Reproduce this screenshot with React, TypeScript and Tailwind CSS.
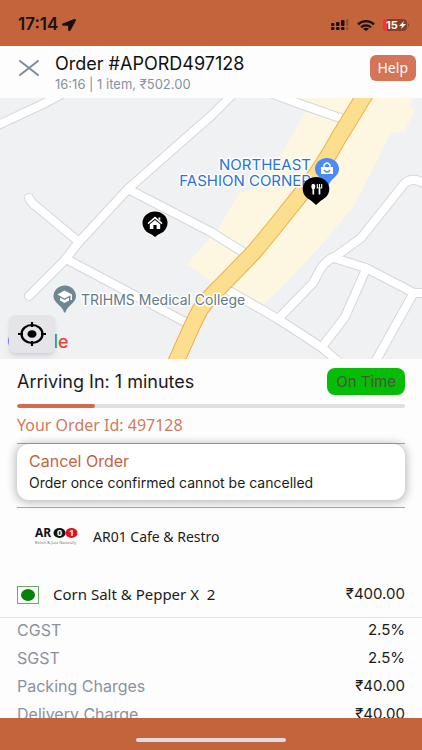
import { FaLocationArrow } from 'react-icons/fa';

const ORDER = {
  id: '497128',
  time: '16:16',
  itemCount: 1,
  total: '₹502.00',
  eta: 1,
  progress: 20,
  restaurant: 'AR01 Cafe & Restro',
};

const ITEMS = [{ name: 'Corn Salt & Pepper', qty: 2, price: '₹400.00' }];

const CHARGES = [
  { label: 'CGST', value: '2.5%' },
  { label: 'SGST', value: '2.5%' },
  { label: 'Packing Charges', value: '₹40.00' },
  { label: 'Delivery Charge', value: '₹40.00' },
];

const ROADS = [
  'M-6 29L43 6L62 -4',
  'M29 198L65 162L78 145L128 91L188 38L211 18L232 -3',
  'M29 100Q31 105 37 109L79 144',
  'M128 91L211 134L246 156',
  'M66 161L187 225',
  'M268 -6L300 6L343 21',
  'M226 191L278 221L321 249L340 265',
  'M278 221L313 185Q318 176 321 170Q328 161 336 158L361 140L404 86Q413 77 428 88',
  'M334 160L366 170L414 195H430',
  'M366 171L345 219L322 249',
  'M413 196L374 266',
  'M258 268Q262 264 267 269',
];

const HIGHWAY = 'M366 -5L339 39Q323 68 309 86L273 131L254 154L222 187Q207 201 200 212L192 228L175 266';

function StatusBar() {
  return (
    <div className="flex h-[46px] shrink-0 items-center justify-between bg-[#c4643d] pl-[18px] pr-3 pt-1">
      <div className="flex items-center gap-1">
        <span className="text-[17px] font-semibold text-[#17100d]">17:14</span>
        <FaLocationArrow className="h-3 w-[14px] text-[#17100d]" preserveAspectRatio="none" />
      </div>
      <div className="flex items-center gap-2">
        <svg viewBox="0 0 18 12" className="h-3 w-[18px]" fill="#17100d">
          <rect x="0" y="4" width="3.500" height="3" rx="1" />
          <rect x="5" y="3" width="3.500" height="4" rx="1" />
          <rect x="10" y="1" width="3.500" height="6" rx="1" />
          <rect x="15" y="0" width="2.500" height="7" rx="1" opacity=".25" />
          <rect x="0" y="8" width="3.500" height="3" rx="1" />
          <rect x="5" y="8" width="3.500" height="3" rx="1" />
          <rect x="10" y="8" width="3.500" height="3" rx="1" />
          <rect x="15" y="8" width="2.500" height="3" rx="1" opacity=".25" />
        </svg>
        <svg viewBox="0 0 18 11" className="h-[11px] w-[18px]" fill="none" stroke="#17100d" strokeWidth="2.200">
          <path d="M1 4.4C5.4 0 12.6 0 17 4.4" />
          <path d="M4 7.3C6.8 4.6 11.2 4.6 14 7.3" />
          <path d="M9 11L6 8.800C7.500 7.400 10.500 7.400 12 8.800Z" fill="#17100d" stroke="none" />
        </svg>
        <svg viewBox="0 0 27 12" className="h-3 w-[27px]">
          <clipPath id="battery">
            <rect width="24" height="12" rx="4" />
          </clipPath>
          <g clipPath="url(#battery)">
            <rect width="24" height="12" fill="#853f2a" />
            <rect width="4" height="12" fill="#f8352d" />
          </g>
          <path d="M25 4Q27 6 25 8Z" fill="#853f2a" />
          <text x="3" y="10" className="font-bold" fontSize="11" fill="#fff">15</text>
          <path d="M21 2L16 7H19L18 10L23 5H20Z" fill="#fff" />
        </svg>
      </div>
    </div>
  );
}

function OrderHeader() {
  return (
    <header className="flex h-[52px] shrink-0 items-start bg-[#fdfdfd] pl-[18px] pr-[6px] pt-[6px]">
      <button type="button" aria-label="Close" className="mr-4 flex h-8 w-[21px] items-center justify-center">
        <svg viewBox="0 0 20 16" className="h-4 w-5" stroke="#7f8b9f" strokeWidth="2" strokeLinecap="round">
          <path d="M1 1L19 15M19 1L1 15" />
        </svg>
      </button>
      <div className="min-w-0 flex-1">
        <h1 className="text-lg leading-6 text-[#111]">Order #APORD{ORDER.id}</h1>
        <p className="text-[13px] leading-4 text-[#8791a2]">
          {ORDER.time} | {ORDER.itemCount} item, {ORDER.total}
        </p>
      </div>
      <button type="button" className="mt-[3px] h-[26px] rounded-md bg-[#d37556] px-2 font-['Noto_Sans',sans-serif] text-sm leading-5 text-white">
        Help
      </button>
    </header>
  );
}

function OrderMap() {
  return (
    <div className="relative h-[261px] shrink-0 overflow-hidden bg-[#eff1f3]">
      <svg viewBox="0 0 422 261" preserveAspectRatio="xMidYMid slice" className="h-full w-full">
        <path
          d="M290 -2L306 13L283 53L254 91L239 95L218 131L187 166L211 183L264 206L286 185L323 145L354 108L378 61L379 57L391 35L404 34L415 12L410 8L414 -2Z"
          fill="#fdf7e2"
        />
        <g fill="none" stroke="#d5d7db" strokeWidth="10" strokeLinecap="round" strokeLinejoin="round">
          {ROADS.map(d => <path key={d} d={d} />)}
        </g>
        <g fill="none" stroke="#fff" strokeWidth="8" strokeLinecap="round" strokeLinejoin="round">
          {ROADS.map(d => <path key={d} d={d} />)}
        </g>
        <path d={HIGHWAY} fill="none" stroke="#edb04a" strokeWidth="17" />
        <path d={HIGHWAY} fill="none" stroke="#fbdf8e" strokeWidth="15" />

        <g stroke="#fff" strokeWidth="3" strokeLinejoin="round" paintOrder="stroke">
          <g fill="#2b73d6" fontSize="15" textAnchor="end">
            <text x="311" y="72">NORTHEAST</text>
            <text x="311" y="88">FASHION CORNER</text>
          </g>
          <text x="81" y="207" fontSize="14" fill="#64798a">TRIHMS Medical College</text>
        </g>

        <path d="M327 60C320 60 315 65 315 71C315 79 324 80 326 89H328C330 80 339 79 339 71C339 65 334 60 327 60Z" fill="#4c8bf5" />
        <path d="M321 69H333V76H321Z" fill="#fff" />
        <path d="M324 70V67Q327 63 330 67V70" fill="none" stroke="#fff" strokeWidth="1.3" />
        <path d="M324 72Q327 76 330 72" fill="none" stroke="#4c8bf5" strokeWidth="1.3" />

        <ellipse cx="316" cy="91" rx="13.3" ry="12" />
        <path d="M307 99H325L316 107Z" />
        <g fill="#fff" stroke="#fff">
          <ellipse cx="313.300" cy="88.500" rx="2" ry="2.700" stroke="none" />
          <path d="M313.300 89V96.500M319.500 91V96.500" strokeWidth="1.700" />
          <path d="M317.300 86V90H321.700V86M319.500 86V91" fill="none" strokeWidth="1.100" />
        </g>

        <ellipse cx="155" cy="125" rx="12.500" ry="11.500" />
        <path d="M146 132H164L155 139Z" />
        <path d="M155 118.500L162.500 125L161.500 126.200L155 120.800L148.500 126.200L147.500 125ZM149.800 126.300L155 122L160.200 126.300V131H156.600V127H153.400V131H149.800ZM158.500 119.500H160.300V122.500L158.500 121Z" fill="#fff" />

        <path d="M65 187.500C58 187.500 53.500 192.500 53.500 198.500C53.500 205 63 208 64 214.500H65.500C66.500 208 76 205 76 198.500C76 192.500 71.500 187.500 65 187.500Z" fill="#6f8794" />
        <path d="M64.500 192.500L57.500 196.500L64.500 200.500L70.500 197.200V202H72V196.500ZM60 199.500V202.500L64.500 205L69 202.500V199.500L64.500 202Z" fill="#fff" />

        <text x="7" y="250" fontSize="18" className="font-medium">
          <tspan fill="#4285f4">G</tspan>
          <tspan fill="#ea4335">o</tspan>
          <tspan fill="#fbbc04">o</tspan>
          <tspan fill="#4285f4">g</tspan>
          <tspan fill="#34a853">l</tspan>
          <tspan fill="#ea4335">e</tspan>
        </text>
      </svg>
      <button
        type="button"
        aria-label="Recenter map"
        className="absolute bottom-[6px] left-[9px] flex h-[38px] w-[46px] items-center justify-center rounded-md bg-[#e4e4e9] shadow-md"
      >
        <svg viewBox="0 0 28 24" className="h-6 w-7" fill="none" stroke="#000" strokeWidth="2.200">
          <ellipse cx="14" cy="12" rx="10.500" ry="9" />
          <path d="M14 0V5M14 19V24M0 12H5M23 12H28" />
          <ellipse cx="14" cy="12" rx="4.500" ry="3.800" fill="#000" stroke="none" />
        </svg>
      </button>
    </div>
  );
}

function OrderStatus() {
  return (
    <section className="px-[17px] pt-[9px]">
      <div className="flex h-[27px] items-center justify-between">
        <h2 className="text-lg text-[#1b1b1b]">Arriving In: {ORDER.eta} minutes</h2>
        <span className="rounded-lg bg-[#05bd05] px-[9px] text-[15px] leading-[27px] text-[#43563f]">On Time</span>
      </div>
      <div
        role="progressbar"
        aria-label="Delivery progress"
        aria-valuenow={ORDER.progress}
        className="mt-[9px] h-1 overflow-hidden rounded-full bg-[#e1e1e3]"
      >
        <div className="h-full rounded-full bg-[#cf6c4c]" style={{ width: `${ORDER.progress}%` }} />
      </div>
      <p className="mt-[5px] font-['Noto_Sans',sans-serif] text-base leading-6 text-[#d27a5c]">Your Order Id: {ORDER.id}</p>
      <div className="mt-[6px] border-y border-[#a9a9a9] pb-[7px]">
        <div className="rounded-xl bg-white px-3 pb-[7px] pt-[5px] shadow-[0_1px_8px_2px_rgba(0,0,0,0.25)]">
          <button type="button" className="block text-base leading-6 text-[#c4643d]">Cancel Order</button>
          <p className="text-sm leading-5 text-[#1b1b1b]">Order once confirmed cannot be cancelled</p>
        </div>
      </div>
    </section>
  );
}

function RestaurantLogo() {
  return (
    <svg viewBox="0 0 42 20" className="h-5 w-[42px] overflow-visible" role="img" aria-label="AR01">
      <text x="0" y="10" className="font-bold" fontSize="12" fill="#111">AR</text>
      <ellipse cx="24.500" cy="6" rx="6" ry="5" fill="#111" />
      <ellipse cx="36.500" cy="6" rx="6" ry="5" fill="#e0101c" />
      <g className="font-bold" fontSize="9" fill="#fff" textAnchor="middle">
        <text x="24.500" y="9">0</text>
        <text x="36.500" y="9">1</text>
      </g>
      <text x="0" y="17" fontSize="4" fill="#777">Relish &amp; Just Naturally</text>
    </svg>
  );
}

function OrderItems() {
  return (
    <section className="font-['Noto_Sans',sans-serif] text-[#1b1b1b]">
      <div className="flex h-[58px] items-center gap-4 px-[35px] text-sm">
        <RestaurantLogo />
        <span>{ORDER.restaurant}</span>
      </div>
      <ul className="border-b border-[#e4e4e6] pt-[6px] text-[15px]">
        {ITEMS.map(item => (
          <li key={item.name} className="flex h-[45px] items-center px-[17px]">
            <svg viewBox="0 0 22 18" className="mr-[14px] h-[18px] w-[22px]">
              <rect x=".5" y=".5" width="21" height="17" fill="#fff" stroke="#6ba86b" />
              <ellipse cx="11" cy="9" rx="7" ry="6" fill="#058205" />
            </svg>
            <span className="flex-1">{item.name} X&nbsp; {item.qty}</span>
            <span className="font-[Inter,sans-serif]">{item.price}</span>
          </li>
        ))}
      </ul>
    </section>
  );
}

function Charges() {
  return (
    <dl className="px-[17px]">
      {CHARGES.map(row => (
        <div key={row.label} className="flex h-7 items-start justify-between leading-6">
          <dt className="text-base text-[#8c91a1]">{row.label}</dt>
          <dd className="text-[15px] leading-6 text-[#1b1b1b]">{row.value}</dd>
        </div>
      ))}
    </dl>
  );
}

export default function App() {
  return (
    <div className="flex h-screen flex-col bg-[#fdfdfd] font-[Inter,sans-serif]">
      <StatusBar />
      <OrderHeader />
      <OrderMap />
      <main className="min-h-0 flex-1 overflow-hidden">
        <OrderStatus />
        <OrderItems />
        <Charges />
      </main>
      <footer className="flex h-8 shrink-0 items-center justify-center bg-[#c4643d] pt-3">
        <div className="h-1 w-[150px] rounded-full bg-[#dedcdc]" />
      </footer>
    </div>
  );
}
